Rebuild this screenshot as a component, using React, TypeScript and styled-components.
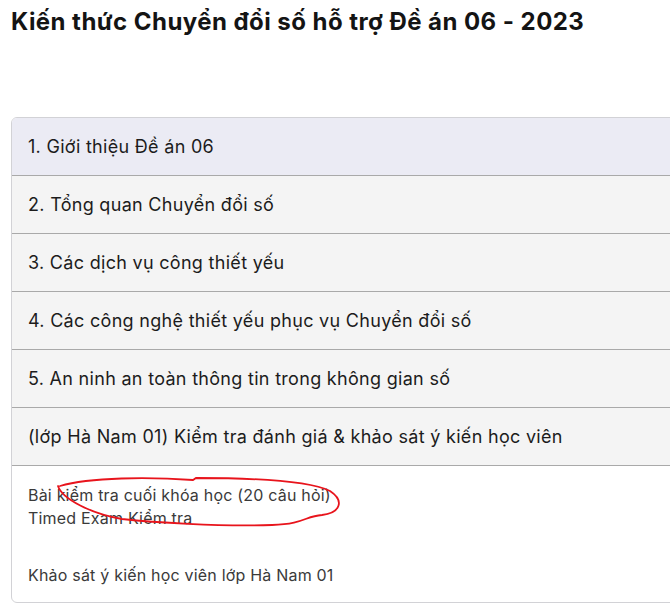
import React from 'react';
import styled, { createGlobalStyle } from 'styled-components';

const GlobalStyle = createGlobalStyle`
  html, body {
    margin: 0;
    padding: 0;
    background: #ffffff;
    overflow: hidden;
  }
  body {
    font-family: Inter, "Noto Sans", "Liberation Sans", sans-serif;
    color: #1c1c1c;
  }
`;

const Page = styled.div`
  width: 670px;
  height: 603px;
  overflow: hidden;
  padding: 0 0 0 11px;
  box-sizing: border-box;
`;

const Title = styled.h1`
  margin: 0;
  padding-top: 8px;
  height: 117px;
  box-sizing: border-box;
  font-size: 24px;
  line-height: 28px;
  font-weight: 700;
  letter-spacing: 0.45px;
  color: #141414;
  white-space: nowrap;
`;

const Accordion = styled.div`
  width: 720px;
  border: 1px solid #d2d2d6;
  border-radius: 6px;
  overflow: hidden;
  background: #ffffff;
`;

const Section = styled.div<{ $active?: boolean }>`
  height: 57px;
  display: flex;
  align-items: center;
  padding: 0 16px;
  background: ${(p) => (p.$active ? '#ebebf4' : '#f4f4f4')};
  border-bottom: 1px solid #a9a9a9;
  font-size: 18px;
  letter-spacing: 0.3px;
  color: #1c1c1c;
  white-space: nowrap;
`;

const Content = styled.div`
  position: relative;
  display: flex;
  flex-direction: column;
  gap: 34px;
  padding: 18px 16px 15px;
`;

const Lesson = styled.div`
  font-size: 16px;
  line-height: 23px;
  letter-spacing: 0.2px;
  color: #3a3a3a;
`;

const Scribble = styled.svg`
  position: absolute;
  left: -12px;
  top: -467px;
  width: 670px;
  height: 603px;
  pointer-events: none;
  overflow: visible;
`;

const sections = [
  '1. Giới thiệu Đề án 06',
  '2. Tổng quan Chuyển đổi số',
  '3. Các dịch vụ công thiết yếu',
  '4. Các công nghệ thiết yếu phục vụ Chuyển đổi số',
  '5. An ninh an toàn thông tin trong không gian số',
  '(lớp Hà Nam 01) Kiểm tra đánh giá & khảo sát ý kiến học viên',
];

const App: React.FC = () => {
  return (
    <>
      <GlobalStyle />
      <Page>
        <Title>Kiến thức Chuyển đổi số hỗ trợ Đề án 06 - 2023</Title>
        <Accordion>
          {sections.map((s, i) => (
            <Section key={s} $active={i === 0}>
              {s}
            </Section>
          ))}
          <Content>
            <Lesson>
              Bài kiểm tra cuối khóa học (20 câu hỏi)
              <br />
              Timed Exam Kiểm tra
            </Lesson>
            <Lesson>Khảo sát ý kiến học viên lớp Hà Nam 01</Lesson>
            <Scribble viewBox="0 0 670 603">
              <path
                d="M 60 487 C 90 478, 150 478, 193 481 L 196 479 C 240 479, 305 480, 330 492 C 345 502, 340 514, 322 516 C 305 517, 305 525, 272 526 C 220 528, 150 523, 122 520 C 92 515, 62 500, 58 487"
                fill="none"
                stroke="#e8141c"
                strokeWidth="1.8"
                strokeLinecap="round"
              />
            </Scribble>
          </Content>
        </Accordion>
      </Page>
    </>
  );
};

export default App;
